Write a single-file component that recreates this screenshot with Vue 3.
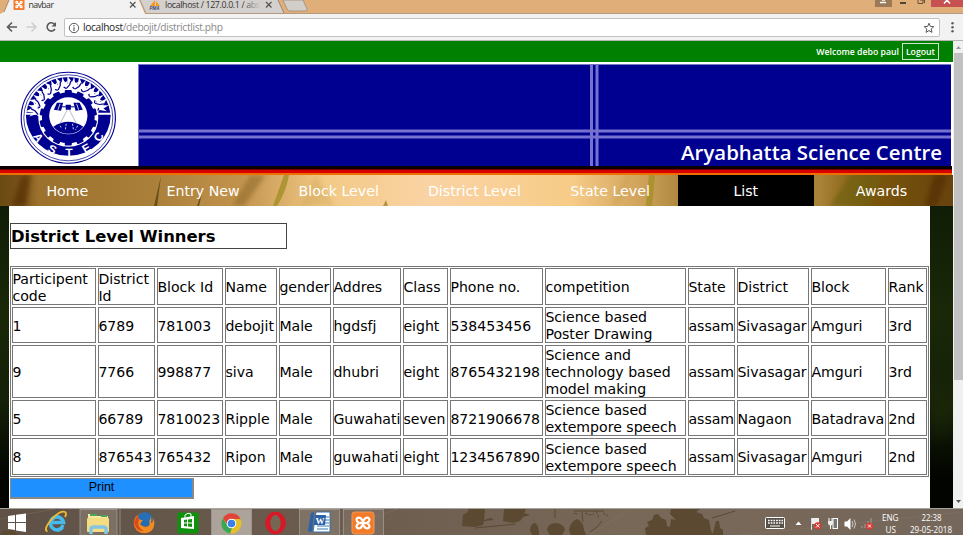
<script setup>
const columns = ['Participent code', 'District Id', 'Block Id', 'Name', 'gender', 'Addres', 'Class', 'Phone no.', 'competition', 'State', 'District', 'Block', 'Rank']
const rows = [
  ['1', '6789', '781003', 'debojit', 'Male', 'hgdsfj', 'eight', '538453456', 'Science based Poster Drawing', 'assam', 'Sivasagar', 'Amguri', '3rd'],
  ['9', '7766', '998877', 'siva', 'Male', 'dhubri', 'eight', '8765432198', 'Science and technology based model making', 'assam', 'Sivasagar', 'Amguri', '3rd'],
  ['5', '66789', '7810023', 'Ripple', 'Male', 'Guwahati', 'seven', '8721906678', 'Science based extempore speech', 'assam', 'Nagaon', 'Batadrava', '2nd'],
  ['8', '876543', '765432', 'Ripon', 'Male', 'guwahati', 'eight', '1234567890', 'Science based extempore speech', 'assam', 'Sivasagar', 'Amguri', '2nd']
]
const cells = [columns, ...rows].flat()
const nav = ['Home', 'Entry New', 'Block Level', 'District Level', 'State Level', 'List', 'Awards']
const teeth = Array.from({ length: 14 }, (_, i) => (i * 360) / 14)
const flames = [-76, -60, -44, -28, -12, 4, 20, 36, 52, 68]
const letters = [
  { t: 'A', a: 56 },
  { t: 'S', a: 26 },
  { t: 'T', a: -1 },
  { t: 'E', a: -30 },
  { t: 'C', a: -57 }
]
</script>

<template>
  <div class="screen">
    <svg class="tabs" width="963" height="14" viewBox="0 0 963 14">
      <rect width="963" height="14" fill="#dfae79" />
      <path d="M0 14 L4 12 L9 0 H139 L145 14 Z" fill="#f2f2f2" />
      <path d="M4 12 L9 0" stroke="#a58a6c" fill="none" />
      <path d="M140 0 L146 13 H284 L278 0 Z" fill="#d3d0cd" />
      <path d="M140 0 L146 13.5 H963" stroke="#b49a80" fill="none" />
      <path d="M278 0 L284 13" stroke="#9b8974" fill="none" />
      <path d="M283 0 L287 9 Q288 11 290 11 H306 Q308 11 307 9 L303 0 Z" fill="#d2cfcb" stroke="#aa967f" />
      <rect x="13.500" y="-2" width="11" height="12" rx="1" fill="#f47a2d" />
      <path d="M17.500 3 L20.500 6 M20.500 3 L17.500 6" stroke="#fff" stroke-width="1.500" />
      <g fill="none" stroke="#fff" stroke-width="1.200"><circle cx="16.800" cy="2.300" r="1" /><circle cx="21.200" cy="2.300" r="1" /><circle cx="16.800" cy="6.700" r="1" /><circle cx="21.200" cy="6.700" r="1" /></g>
      <text x="28.500" y="8" class="tab-text" textLength="25.500">navbar</text>
      <path d="M130 2 L135.500 7.500 M135.500 2 L130 7.500 M266 2 L271.500 7.500 M271.500 2 L266 7.500" stroke="#555" stroke-width="1.200" />
      <path d="M150 6 L155 0 V6 Z M156 6 V1 L160 6 Z" fill="#f39a1d" />
      <text x="149.500" y="10" class="pma">PMA</text>
      <text x="165" y="8" class="tab-text" textLength="95">localhost / 127.0.0.1 / abs</text>
      <defs><linearGradient id="fade"><stop stop-color="#d3d0cd" stop-opacity="0" /><stop offset="1" stop-color="#d3d0cd" /></linearGradient></defs>
      <rect x="242" y="0" width="19" height="11" fill="url(#fade)" />
      <rect x="875" width="17" height="7" fill="#9a7a58" />
      <path d="M880 2.500 H886 M882 0 H885" stroke="#fff" stroke-width="1.500" />
      <path d="M900 3 H906" stroke="#222" stroke-width="1.500" />
      <path d="M918 0 V3.500 H923 V0 M920 0 H924.500 V3" stroke="#6b5136" fill="none" />
      <rect x="931" width="32" height="7" fill="#c75050" />
      <path d="M944 3.500 L947 0 L950 3.500" stroke="#fff" stroke-width="1.500" fill="none" />
    </svg>

    <div class="toolbar">
      <svg width="64" height="26" viewBox="0 0 64 26" fill="none" stroke="#5a5a5a" stroke-width="1.600">
        <path d="M17 13 H8 M12 8.500 L7.500 13 L12 17.500" />
        <path d="M26.500 13 H35.500 M31.500 8.500 L36 13 L31.500 17.500" stroke="#cfcfcf" />
        <path d="M54.800 10.500 A4.200 4.200 0 1 0 55 15" /><path d="M56 8 V12.500 H51.500 Z" fill="#5a5a5a" stroke="none" />
      </svg>
      <div class="omnibox">
        <svg width="12" height="12" viewBox="0 0 12 12"><circle cx="6" cy="6" r="4.700" fill="none" stroke="#5a5a5a" /><path d="M6 5.200 V9 M6 3 V4.200" stroke="#5a5a5a" stroke-width="1.200" /></svg>
        <span class="url"><b>localhost</b>/debojit/districtlist.php</span>
        <svg width="12" height="12" viewBox="0 0 12 12"><path d="M6 1.200 L7.300 4.400 L10.800 4.700 L8.200 7 L9 10.400 L6 8.600 L3 10.400 L3.800 7 L1.200 4.700 L4.700 4.400 Z" fill="none" stroke="#5a5a5a" /></svg>
      </div>
      <svg width="23" height="26" viewBox="0 0 23 26" fill="#5a5a5a"><circle cx="12.500" cy="9.300" r="1.200" /><circle cx="12.500" cy="13.300" r="1.200" /><circle cx="12.500" cy="17.300" r="1.200" /></svg>
    </div>

    <div class="viewport">
      <main class="page">
        <div class="welcome"><span>Welcome debo paul</span><a class="logout">Logout</a></div>
        <header class="banner">
          <svg class="seal" width="138" height="104" viewBox="0 62 138 104">
            <g transform="translate(68.300 117.800) scale(1.035 1)">
              <circle r="45.500" fill="#fff" stroke="#000090" stroke-width="1.100" />
              <circle r="43" fill="#fff" stroke="#000090" stroke-width=".7" />
              <path d="M-41 -3 A41 41 0 0 0 41 -3 L25 -3 A27 27 0 0 1 -25 -3 Z" fill="#000090" />
              <path d="M-40.500 -5 A40.800 40.800 0 0 1 40.500 -5 L29 -5 A29 29 0 0 0 -29 -5 Z" fill="#000090" />
              <g fill="#fff">
                <path v-for="f in flames" :key="f" :transform="`rotate(${f})`" d="M-6 -28 L-4 -31 L-8 -37 L-3 -34 L-4 -42 L1 -36 L3 -41 L4 -35 L8 -37 L4 -31 L6 -28 Z" />
              </g>
              <g fill="none" stroke="#000090" stroke-width="1.200">
                <path v-for="f in flames" :key="f" :transform="`rotate(${f})`" d="M-4 -29 L-1 -33 L0 -37 M4 -29 L2 -31" />
              </g>
              <circle r="29" fill="#fff" />
              <circle r="25.500" fill="#000090" />
              <rect v-for="t in teeth" :key="t" :transform="`rotate(${t})`" x="-3.400" y="-27.800" width="6.800" height="5" rx="1" fill="#000090" />
              <circle cy="-2" r="18.500" fill="#fff" />
              <path d="M-14.500 9 Q0 -1 14.500 9 A18.500 18.500 0 0 1 -14.500 9 Z" fill="#000090" />
              <path d="M-8 8 L-6 11 M-2 6 L-3 13 M4 6 L5 12 M9 8 L7 12" stroke="#fff" stroke-width=".8" stroke-dasharray="2 1.500" />
              <path d="M-1 -8 L-8 6 M1 -8 L8 6" stroke="#8c8cae" stroke-width=".6" />
              <path d="M-11 -15 L-5 -15 L-7 -7 L-14 -8 Z M11 -15 L5 -15 L7 -7 L14 -8 Z M-2.500 -13 H2.500 V-8 H-2.500 Z" fill="#000090" />
              <path d="M-8 -14 L-10 -8 M8 -14 L10 -8" stroke="#fff" stroke-width=".8" /><path d="M-6 -11 H6" stroke="#000090" />
              <text v-for="l in letters" :key="l.t" :transform="`rotate(${l.a})`" x="0" y="39" class="seal-text">{{ l.t }}</text>
            </g>
          </svg>
          <div class="blue">
            <svg width="813" height="102" viewBox="0 0 813 102">
              <rect width="813" height="102" fill="#000090" />
              <path d="M0 .5 H813 M.5 0 V102" stroke="#7878c4" />
              <g stroke="#7472ce" stroke-width="3"><path d="M0 67 H813 M0 73 H813 M453.500 0 V102 M459 0 V102" /></g>
            </svg>
            <span class="centre">Aryabhatta Science Centre</span>
          </div>
        </header>
        <div class="stripe"></div>
        <nav class="nav">
          <svg class="grass" width="953" height="31" viewBox="0 0 953 31" preserveAspectRatio="none">
            <defs>
              <linearGradient id="g"><stop stop-color="#6b4a12" /><stop offset=".022" stop-color="#79521a" /><stop offset=".04" stop-color="#9b712b" /><stop offset=".16" stop-color="#aa7f3a" /><stop offset=".25" stop-color="#c1924c" /><stop offset=".34" stop-color="#f2c985" /><stop offset=".45" stop-color="#fad3a5" /><stop offset=".6" stop-color="#f7cc88" /><stop offset=".67" stop-color="#d1a45c" /><stop offset=".72" stop-color="#a98339" /><stop offset=".86" stop-color="#a98337" /><stop offset=".91" stop-color="#7b570b" /><stop offset="1" stop-color="#67430e" /></linearGradient>
              <filter id="soft"><feGaussianBlur stdDeviation="2" /></filter>
            </defs>
            <rect width="953" height="31" fill="url(#g)" />
            <g filter="url(#soft)">
              <path d="M22 0 H31 L26 31 H12 Z M934 0 L948 0 L937 31 H925 Z" fill="#512c08" opacity=".65" />
              <path d="M250 0 L232 31 H244 L266 0 Z" fill="#8a682c" opacity=".55" />
              <path d="M850 0 L830 31 H870 L882 0 Z" fill="#71600a" opacity=".7" />
              <path d="M625 0 L610 31 H619 L633 0 Z M300 31 L316 0 L335 31 Z" fill="#c39b45" opacity=".3" />
            </g>
            <path d="M161 1 L157 31 H154 Z M203 14 L199 31 H197 Z" fill="#665018" />
            <path d="M284 0 H289 Q286 17 277 31 H273 Z M649 0 H655 L652 31 H646 Z" fill="#a5902d" opacity=".85" />
            <path d="M386 25 L388 31 H383 Z" fill="#b99142" />
          </svg>
          <a v-for="item in nav" :key="item" class="nav-item" :class="{ active: item === 'List' }">{{ item }}</a>
        </nav>
        <div class="backdrop">
          <section class="content">
            <h2 class="title">District Level Winners</h2>
            <div class="grid">
              <div v-for="(c, i) in cells" :key="i" class="cell"><span>{{ c }}</span></div>
            </div>
            <button class="print">Print</button>
          </section>
        </div>
      </main>
      <div class="scroll">
        <svg width="10" height="12" viewBox="0 0 10 12"><path d="M3 8 L5.500 5 L8 8 Z" fill="#999" /></svg>
        <div class="thumb"></div>
        <svg class="down" width="10" height="12" viewBox="0 0 10 12"><path d="M3 4 H8 L5.500 7 Z" fill="#555" /></svg>
      </div>
    </div>

    <svg class="taskbar" width="963" height="27" viewBox="0 508 963 27">
      <defs>
        <linearGradient id="task"><stop stop-color="#5f5146" /><stop offset=".4" stop-color="#6d5e50" /><stop offset=".65" stop-color="#786858" /><stop offset="1" stop-color="#75675b" /></linearGradient>
        <linearGradient id="fold" x2="0" y2="1"><stop stop-color="#fff0a8" /><stop offset="1" stop-color="#e7c45f" /></linearGradient>
      </defs>
      <rect y="508" width="963" height="27" fill="url(#task)" />
      <path d="M0 508.500 H963" stroke="#a9a39d" />
      <g fill="#5b4932">
        <path d="M462 526 L463 515 L468 512 V509 H485 L484 520 L491 518 L494 520 L484 521 L483 525 L475 527 Z M503 521 L504 509 H526 L524 513 L530 515 L523 517 L520 521 L513 523 Z" />
        <path d="M530 530 Q531 523 535 523 Q539 525 539 535 H532 Z M547 530 Q548 523 556 523 Q564 524 565 530 L562 535 H550 Z M569 530 Q570 522 577 519 Q583 521 584 530 L586 535 H571 Z" />
        <path d="M645 528 L649 526 L647 522 L652 520 L654 515 L658 514 L661 518 L666 520 L667 526 L670 527 L671 519 L676 520 L670 514 L671 509 H700 L696 512 L702 514 L704 518 L709 520 L711 531 L714 535 H646 Z M713 533 L716 521 L719 521 L720 528 L723 530 V535 H713 Z" />
        <path d="M0 535 L4 530 L8 531 L11 528 L18 535 Z" />
      </g>
      <path d="M475 528 L516 524 M555 509 V518 M574 511 H604 M582 512 L583 522 M602 521 L597 527 L590 532 M712 518 L735 511" fill="none" stroke="#5b4932" />
      <path d="M585 513 L590 515 L594 514 M596 511 L599 518 M577 514 L573 513 M603 513 L608 516" stroke="#5b4932" fill="none" stroke-dasharray="3 1" />
      <path d="M0 519 L60 508 M330 535 L400 508 M590 535 L630 509 M740 535 L963 512" stroke="#8e7e6e" opacity=".3" />
      <g stroke="#a19a92" stroke-width=".8"><rect x="80" y="509.500" width="37" height="27" fill="#92877a" fill-opacity=".55" /><path d="M120 509 V535" /><rect x="211.500" y="509.500" width="40" height="27" fill="#aca49b" /><rect x="299.500" y="509.500" width="40" height="27" fill="#897e71" fill-opacity=".65" /><rect x="343.500" y="509.500" width="40" height="27" fill="#897e71" fill-opacity=".45" /></g>
      <path d="M8 516 L15 515 V522 H8 Z M16 514.800 L26 513.500 V522 H16 Z M8 523 H15 V530 L8 529 Z M16 523 H26 V532 L16 530.500 Z" fill="#fff" />
      <path d="M63 525 Q61 530 57 530" fill="none" stroke="#53c4f0" stroke-width="3" />
      <path d="M50.500 522.500 H63.500 A6.500 6.500 0 1 0 62.500 527" fill="none" stroke="#45bbed" stroke-width="3.600" />
      <path d="M47.500 531.500 Q43 530 51 520 Q60 510 65 512 Q67 513 65 517" fill="none" stroke="#f2bd2d" stroke-width="1.800" />
      <g><path d="M88 514 H95 L97 516 H108 V531 H88 Z" fill="url(#fold)" /><path d="M90 515 H97 M101 516 H107" stroke="#44a95c" stroke-width="2" /><rect x="87" y="518" width="22" height="14" rx="1" fill="#f4dc83" /><path d="M91 534 V529 Q91 527 94 527 H103 Q106 527 106 529 V534" fill="none" stroke="#86c5e2" stroke-width="3.500" /></g>
      <g><circle cx="144" cy="523" r="10.300" fill="#e66518" /><circle cx="145.500" cy="519.500" r="7.300" fill="#236cae" /><path d="M146 513 Q153 516 151 523 Q153 523 154 519 Q156 533 144 533 Q134 532 134 522 L136 516 L139 519 L143 520 L140 524 Q144 529 149 526 Q150 523 149 518" fill="#ef8b20" /><path d="M138 515 Q144 510 150 515 Q152 520 147 522 L142 520 L139 519 Z" fill="#286fb6" /><path d="M134 522 L137 516 L139 520 Q136 527 144 531 Q136 532 134 522" fill="#dc4b17" /></g>
      <rect x="177.500" y="512.500" width="21" height="21" fill="#10910d" /><path d="M181 518 L194 516 V529 L181 528 Z" fill="#fff" /><path d="M185 518 V515 Q188 512 191 514 V517" fill="none" stroke="#fff" /><path d="M184 520 L187 519.500 V522.500 H184 Z M188 519.500 L192 519 V522.500 H188 Z M184 523.500 H187 V526.500 L184 526 Z M188 523.500 H192 V527 L188 526.500 Z" fill="#10910d" />
      <g><circle cx="231.500" cy="523.500" r="10" fill="#e7bf28" /><path d="M223 518 A10 10 0 0 1 240.500 519 H231.500 L227.500 525 Z" fill="#df453b" /><path d="M223 518 L227.500 526 L232 528 L230 533.500 A10 10 0 0 1 223 518" fill="#3aa757" /><circle cx="231.500" cy="523.500" r="4.800" fill="#fff" /><circle cx="231.500" cy="523.500" r="3.800" fill="#397fe5" /></g>
      <ellipse cx="275.500" cy="523" rx="7.800" ry="8.700" fill="none" stroke="#da1727" stroke-width="5" /><ellipse cx="275.500" cy="523" rx="5" ry="8" fill="#756754" />
      <g><path d="M316 512 H330 V532 H313 Z" fill="#fff" stroke="#386fad" /><path d="M325 517 H329 M325 520 H329 M325 523 H329 M317 526 H329 M317 529 H328" stroke="#327ab9" /><path d="M311 513 L314 512 L312 532 L308 531 Z" fill="#2a61a7" /><path d="M315 515 H326 L325 525 H314 Z" fill="#2a61a7" /><text x="315.500" y="523.500" class="word">W</text></g>
      <rect x="352" y="512" width="22" height="22" rx="2.500" fill="#f37a26" stroke="#ef9a61" />
      <path d="M363 521 L360.500 518 Q357 517 356.500 519.500 Q356.500 521.500 359 523 Q356.500 524.500 356.500 526.500 Q357 529 360.500 528 L363 525 L365.500 528 Q369 529 369.500 526.500 Q369.500 524.500 367 523 Q369.500 521.500 369.500 519.500 Q369 517 365.500 518 Z M360 523 H366" fill="none" stroke="#fff" stroke-width="2.300" stroke-linejoin="round" />
      <rect x="765.500" y="517.500" width="19" height="11" rx="1" fill="#575049" stroke="#fff" /><path d="M768 520.500 H783 M768 523 H783" stroke="#fff" stroke-width="1.500" stroke-dasharray="1.700 1" /><path d="M770 526 H780" stroke="#fff" />
      <path d="M795.500 525 L798.500 521.500 L801.500 525 Z" fill="#fff" />
      <path d="M811.500 518 V530" stroke="#ddd" /><path d="M812 518 H819 V524 H812 Z" fill="#eee" /><circle cx="817.700" cy="525.700" r="3.500" fill="#de3931" /><path d="M816 524 L819.500 527.500 M819.500 524 L816 527.500" stroke="#fff" />
      <rect x="833" y="518.500" width="4.500" height="10" fill="#777" stroke="#fff" /><path d="M828 521 H833 V524 L830.500 526 L828 524 Z" fill="#eee" /><path d="M829 518 V521 M832 518 V521 M830.500 525 V529" stroke="#fff" />
      <path d="M844.500 521.500 H847 L850.500 518 V530 L847 526.500 H844.500 Z" fill="#fff" /><path d="M852 521 Q854 524 852 527 M854 519.500 Q857 524 854 528.500" fill="none" stroke="#ccc" />
      <path d="M862 528 V526 M865 528 V524 M868 528 V521 M871 528 V518" stroke="#8f8984" stroke-width="1.700" /><circle cx="869.500" cy="526" r="3.500" fill="#de3931" /><path d="M868 524.500 L871 527.500 M871 524.500 L868 527.500" stroke="#fff" />
      <g class="tray"><text x="882" y="521" textLength="16.500" lengthAdjust="spacingAndGlyphs">ENG</text><text x="885.500" y="533" textLength="10.500" lengthAdjust="spacingAndGlyphs">US</text><text x="921.500" y="521" textLength="20" lengthAdjust="spacingAndGlyphs">22:38</text><text x="910" y="533" textLength="42" lengthAdjust="spacingAndGlyphs">29-05-2018</text></g>
    </svg>
  </div>
</template>

<style>
body { overflow: hidden; }
</style>
<style scoped>
.screen { width: 963px; height: 535px; overflow: hidden; display: flex; flex-direction: column; background: #fff; font-family: 'DejaVu Sans', sans-serif; color: #000; }
.screen svg { display: block; flex: none; }
.tab-text { font: 8.8px 'Open Sans', sans-serif; fill: #333; }
.pma { font: italic bold 4.5px 'Liberation Sans', sans-serif; fill: #41406e; }
.word { font: bold 9px 'Liberation Serif', serif; fill: #fff; }
.tray { font: 9px 'Open Sans', sans-serif; fill: #fff; }
.toolbar { height: 27px; box-sizing: border-box; flex: none; display: flex; background: #f2f2f2; border-bottom: 1px solid #b5b5b5; }
.omnibox { flex: 1; height: 19px; box-sizing: border-box; margin-top: 4px; padding: 0 4px 0 3px; display: flex; align-items: center; gap: 3px; background: #fff; border: 1px solid #c1c1c1; border-radius: 2px; }
.url { flex: 1; font: 10.2px/17px 'Open Sans', sans-serif; letter-spacing: -0.33px; color: #888; }
.url b { font-weight: 400; color: #222; }
.viewport { height: 467px; flex: none; display: flex; }
.page { width: 953px; display: flex; flex-direction: column; overflow: hidden; }
.welcome { height: 21px; flex: none; box-sizing: border-box; padding-right: 14px; display: flex; align-items: center; justify-content: flex-end; gap: 3px; background: #008000; color: #fff; font: 600 8.7px/18px 'Open Sans', sans-serif; }
.logout { height: 17px; line-height: 16px; box-sizing: border-box; border: 1px solid #cfe5cf; padding: 0 3px; }
.banner { height: 104px; flex: none; display: flex; background: #fff; }
.seal-text { font: bold 11.5px 'Liberation Sans', sans-serif; fill: #fff; text-anchor: middle; }
.blue { display: grid; width: 813px; height: 102px; margin-top: 2px; }
.blue > * { grid-area: 1 / 1; }
.centre { align-self: end; justify-self: end; padding: 0 9px 0 0; font: 600 20.4px/27px 'Open Sans', sans-serif; color: #fff; white-space: nowrap; }
.stripe { height: 9px; flex: none; width: 952px; background: linear-gradient(#0b0003 0 3px, #d90000 4px 7px, #ef7000 7px 9px); }
.nav { height: 31px; flex: none; display: grid; grid-template-columns: repeat(7, 135.7px); width: 953px; }
.grass { grid-area: 1 / 1 / 2 / 8; }
.nav-item { grid-row: 1; z-index: 1; height: 31px; color: #fff; text-align: center; font-size: 14.2px; line-height: 32px; box-sizing: border-box; padding-right: 1px; }
.nav-item:nth-of-type(1) { grid-column: 1; }
.nav-item:nth-of-type(2) { grid-column: 2; }
.nav-item:nth-of-type(3) { grid-column: 3; }
.nav-item:nth-of-type(4) { grid-column: 4; }
.nav-item:nth-of-type(5) { grid-column: 5; }
.nav-item:nth-of-type(6) { grid-column: 6; }
.nav-item:nth-of-type(7) { grid-column: 7; }
.nav-item.active { background: #000; }
.backdrop { flex: 1; padding: 0 23px 0 9px; display: flex; background: radial-gradient(ellipse 25px 40px at 942px 200px, #1b2608, transparent), linear-gradient(#101d06, #1a2808 35%, #142007 65%, #020400 90%); }
.content { flex: 1; box-sizing: border-box; padding: 17px 1px 0; background: #fff; display: flex; flex-direction: column; align-items: flex-start; }
.title { width: 277px; height: 26px; box-sizing: border-box; margin: 0 0 17px; border: 1px solid #444; font-size: 16.4px; line-height: 26px; white-space: nowrap; }
.grid { display: grid; grid-template-columns: 84px 57px 66px 52px 52px 68px 45px 93px 141px 47px 72px 75px 39px; grid-template-rows: 37px 36px 53px 36px 37px; gap: 2px; padding: 1px; border: 1px solid #777; }
.cell { box-sizing: border-box; border: 1px solid #777; padding-top: 2px; display: flex; align-items: center; min-width: 0; min-height: 0; font-size: 14.1px; line-height: 17px; }
.cell span { max-width: 100%; margin-left: -0.6px; }
.print { width: 184px; height: 21px; margin-top: 1px; padding: 0 0 2px; border: 1px solid #888; border-right-width: 2px; border-bottom-width: 2px; background: #1e90ff; color: #000; font: 12.5px/16px 'Liberation Sans', sans-serif; }
.scroll { width: 10px; display: flex; flex-direction: column; background: #f0f0f0; }
.thumb { height: 327px; margin-left: 1px; background: #c1c1c1; }
.down { margin-top: auto; }
</style>
